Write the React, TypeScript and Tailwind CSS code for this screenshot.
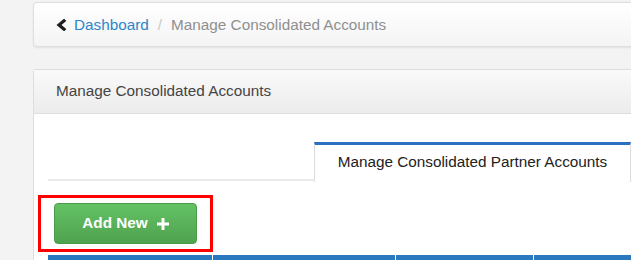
import React from "react";

export default function App() {
  const font = { fontFamily: '"Liberation Sans", Arial, sans-serif' };
  return (
    <div
      className="w-[631px] h-[260px] overflow-hidden bg-[#f3f3f3] pl-[33px] pt-[2px]"
      style={font}
    >
      <div className="w-[640px]">
        {/* Breadcrumb */}
        <div className="h-[45px] rounded-[4px] border border-[#dedede] bg-gradient-to-b from-white to-[#f4f4f4] shadow-[0_1px_2px_rgba(0,0,0,0.08)] flex items-center pl-[22px] text-[15.3px] leading-none">
          <svg width="11" height="12" viewBox="0 0 11 12" className="mr-[7px]">
            <polyline
              points="8,1.8 3,6 8,10.2"
              fill="none"
              stroke="#1e1e1e"
              strokeWidth="3.2"
              strokeLinecap="square"
            />
          </svg>
          <span className="text-[#2d86cc]">Dashboard</span>
          <span className="text-[#c8c8c8] px-[9px]">/</span>
          <span className="text-[#8f8f8f]">Manage Consolidated Accounts</span>
        </div>

        {/* Panel */}
        <div className="mt-[22px] border border-[#dddddd] rounded-t-[3px] bg-white">
          <div className="h-[44px] border-b border-[#dddddd] bg-gradient-to-b from-[#fafafa] to-[#ececec] flex items-center pl-[22px] text-[15.3px] text-[#444]">
            Manage Consolidated Accounts
          </div>
          <div className="pl-[14px] pt-[28px]">
            <div className="flex border-b-2 border-[#ebebeb] h-[39px]">
              <div className="w-[266px]" />
              <div className="w-[317px] h-[40px] bg-white border-t-[3px] border-t-[#2b6fc2] border-x border-x-[#dddddd] flex items-center justify-center text-[15.3px] text-[#222] pb-[3px]">
                Manage Consolidated Partner Accounts
              </div>
            </div>
            <div className="mt-[14px] ml-[-10px] inline-flex border-[3px] border-[#ff0000] px-[13px] py-[5px]">
              <button className="w-[143px] h-[41px] rounded-[4px] bg-gradient-to-b from-[#64c264] to-[#4fa24f] text-white font-bold text-[15.3px] flex items-center justify-center gap-[9px] border border-[#4a9a4a]">
                <span>Add New</span>
                <svg width="12" height="12" viewBox="0 0 12 12">
                  <rect x="4.5" y="0" width="3" height="12" fill="white" />
                  <rect x="0" y="4.5" width="12" height="3" fill="white" />
                </svg>
              </button>
            </div>
            <div className="mt-[3px] h-[10px] flex">
              <div className="w-[165px] bg-[#2a78bd] border-r border-white" />
              <div className="w-[183px] bg-[#2a78bd] border-r border-white" />
              <div className="w-[138px] bg-[#2a78bd] border-r border-white" />
              <div className="flex-1 bg-[#2a78bd]" />
            </div>
          </div>
        </div>
      </div>
    </div>
  );
}
